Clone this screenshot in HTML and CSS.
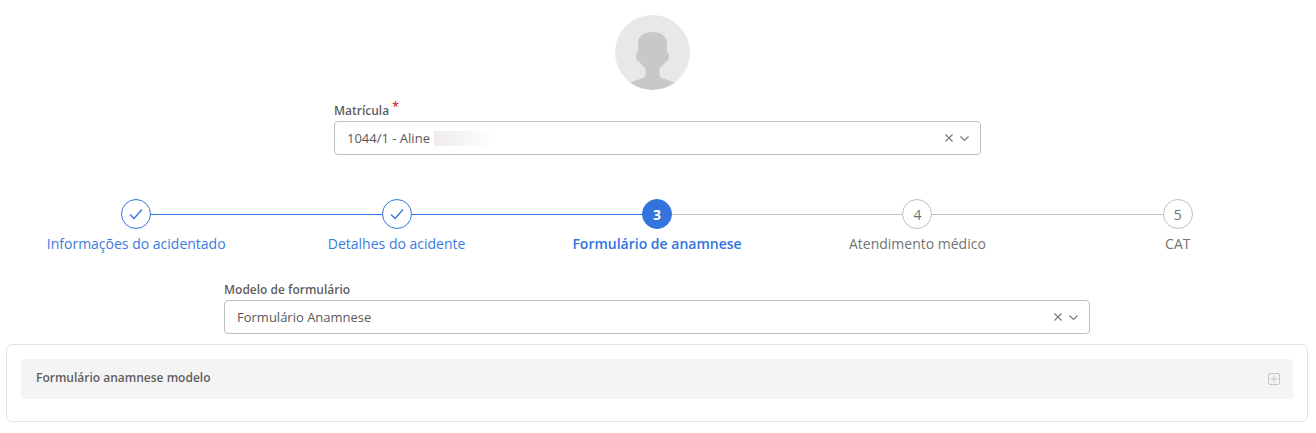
FILE: index.html
```html
<!DOCTYPE html>
<html lang="pt-br">
<head>
    <meta charset="UTF-8">
    <meta name="viewport" content="width=device-width, initial-scale=1.0">
    <link rel="stylesheet" href="styles.css">
    <title>Anamnese</title>
</head>
<body>
    <main class="page">
        <section class="employee">
            <div class="avatar">
                <svg viewBox="0 0 75 75" width="75" height="75">
                    <path fill="#c8c8c8" d="M15 67.500 L28 63 C30 62 30.500 60.500 30.500 58 L30.500 53 C28 51 26 50 25 47 C22.500 47 21 44 21 41.500 C21 39 22 37.500 23 37 L23 28 C23 21 29 17 37.500 17 C46 17 52 21 52 28 L52 37 C53 37.500 54 39 54 41.500 C54 44 52.500 47 50 47 C49 50 47 51 44.500 53 L44.500 58 C44.500 60.500 45 62 47 63 L60 67.500 C53 72.500 45.500 75 37.500 75 C29.500 75 22 72.500 15 67.500 Z"/>
                </svg>
            </div>
            <div class="field field-employee">
                <label class="field-label">Matrícula<span class="required">*</span></label>
                <div class="select">
                    <span class="select-value">1044/1 - Aline <span class="blur"></span></span>
                    <svg class="select-clear" viewBox="0 0 8 8" width="8" height="8"><path d="M.5 .5 L7.500 7.500 M7.500 .5 L.5 7.500"/></svg>
                    <svg class="select-arrow" viewBox="0 0 9 5" width="9" height="5"><path d="M.5 .5 L4.500 4.500 L8.500 .5"/></svg>
                </div>
            </div>
        </section>

        <ol class="steps">
            <li class="step done">
                <div class="step-track">
                    <span class="step-line hide"></span>
                    <span class="step-circle">
                        <svg viewBox="0 0 14 12" width="14" height="12"><path d="M1 6.500 L5 10.500 L13 1.500"/></svg>
                    </span>
                    <span class="step-line on"></span>
                </div>
                <span class="step-name">Informações do acidentado</span>
            </li>
            <li class="step done">
                <div class="step-track">
                    <span class="step-line on"></span>
                    <span class="step-circle">
                        <svg viewBox="0 0 14 12" width="14" height="12"><path d="M1 6.500 L5 10.500 L13 1.500"/></svg>
                    </span>
                    <span class="step-line on"></span>
                </div>
                <span class="step-name">Detalhes do acidente</span>
            </li>
            <li class="step active">
                <div class="step-track">
                    <span class="step-line on"></span>
                    <span class="step-circle">3</span>
                    <span class="step-line"></span>
                </div>
                <span class="step-name">Formulário de anamnese</span>
            </li>
            <li class="step">
                <div class="step-track">
                    <span class="step-line"></span>
                    <span class="step-circle">4</span>
                    <span class="step-line"></span>
                </div>
                <span class="step-name">Atendimento médico</span>
            </li>
            <li class="step">
                <div class="step-track">
                    <span class="step-line"></span>
                    <span class="step-circle">5</span>
                    <span class="step-line hide"></span>
                </div>
                <span class="step-name">CAT</span>
            </li>
        </ol>

        <div class="field field-model">
            <label class="field-label">Modelo de formulário</label>
            <div class="select">
                <span class="select-value">Formulário Anamnese</span>
                <svg class="select-clear" viewBox="0 0 8 8" width="8" height="8"><path d="M.5 .5 L7.500 7.500 M7.500 .5 L.5 7.500"/></svg>
                <svg class="select-arrow" viewBox="0 0 9 5" width="9" height="5"><path d="M.5 .5 L4.500 4.500 L8.500 .5"/></svg>
            </div>
        </div>

        <section class="card">
            <div class="collapse">
                <span class="collapse-title">Formulário anamnese modelo</span>
                <svg class="collapse-icon" viewBox="0 0 12 12" width="12" height="12"><rect x=".5" y=".5" width="11" height="11" rx="1.500"/><path d="M6 2.500 V9.500 M2.500 6 H9.500"/></svg>
            </div>
        </section>
    </main>
</body>
</html>
```

FILE: styles.css
```css
*{
    font-family: "Open Sans", "Noto Sans", sans-serif;
    margin: 0;
    padding: 0;
    box-sizing: border-box;
}
body{
    background-color: #fff;
    color: #595959;
}
.page{
    display: flex;
    flex-direction: column;
    align-items: center;
    padding: 15px 8px 0 6px;
}

.employee{
    display: flex;
    flex-direction: column;
    align-items: center;
    width: 100%;
}
.avatar{
    width: 75px;
    height: 75px;
    margin-right: 9px;
    border-radius: 50%;
    background-color: #e8e8e8;
    overflow: hidden;
}
.avatar svg{
    display: block;
}

.field-employee{
    width: 647px;
    margin-top: 10px;
    margin-left: 1px;
}
.field-model{
    width: 866px;
    margin-top: 25px;
}
.field-label{
    display: block;
    height: 21px;
    font-size: 12px;
    line-height: 21px;
    font-weight: 600;
    color: #5f5f5f;
}
.required{
    position: relative;
    top: -4px;
    margin-left: 3px;
    font-size: 12px;
    line-height: 1;
    color: #e02020;
}
.select{
    display: flex;
    align-items: center;
    height: 34px;
    padding: 0 11px 0 12px;
    border: 1px solid #bfbfbf;
    border-radius: 4px;
    background-color: #fff;
}
.select-value{
    flex: 1;
    display: flex;
    align-items: center;
    gap: 4px;
    font-size: 13px;
    color: #595959;
}
.blur{
    display: inline-block;
    width: 59px;
    height: 15px;
    background: linear-gradient(to right, #efecea, #fff);
}
.select-clear{
    margin-right: 7px;
}
.select-clear path,
.select-arrow path{
    fill: none;
    stroke: #777;
    stroke-width: 1.100;
}

.steps{
    display: grid;
    grid-template-columns: repeat(5, 1fr);
    width: 100%;
    margin-top: 44px;
    list-style: none;
}
.step{
    display: flex;
    flex-direction: column;
    align-items: center;
}
.step-track{
    display: flex;
    align-items: center;
    width: 100%;
}
.step-line{
    flex: 1;
    height: 1px;
    background-color: #bfbfbf;
}
.step-line.on{
    background-color: #3273dc;
}
.step-line.hide{
    visibility: hidden;
}
.step-circle{
    display: flex;
    align-items: center;
    justify-content: center;
    width: 30px;
    height: 30px;
    border: 1px solid #bfbfbf;
    border-radius: 50%;
    font-size: 14px;
    color: #6f6f6f;
}
.step-name{
    margin-top: 5px;
    font-size: 14px;
    line-height: 20px;
    color: #737373;
}
.done .step-circle{
    border-color: #3273dc;
}
.done svg path{
    fill: none;
    stroke: #3273dc;
    stroke-width: 1.300;
}
.done .step-name{
    color: #3b7be0;
}
.active .step-circle{
    border-color: #3273dc;
    background-color: #3273dc;
    color: #fff;
    font-weight: 700;
}
.active .step-name{
    color: #3273dc;
    font-weight: 600;
}

.card{
    width: 100%;
    height: 78px;
    margin-top: 10px;
    padding: 14px;
    border: 1px solid #e3e3e3;
    border-radius: 6px;
}
.collapse{
    display: flex;
    align-items: center;
    justify-content: space-between;
    height: 40px;
    padding: 0 13px 3px 15px;
    background-color: #f4f4f4;
    border-radius: 4px;
}
.collapse-title{
    font-size: 12px;
    font-weight: 600;
    color: #5f5f5f;
}
.collapse-icon{
    margin-top: 3px;
}
.collapse-icon rect,
.collapse-icon path{
    fill: none;
    stroke: #c4c4c4;
}
```
